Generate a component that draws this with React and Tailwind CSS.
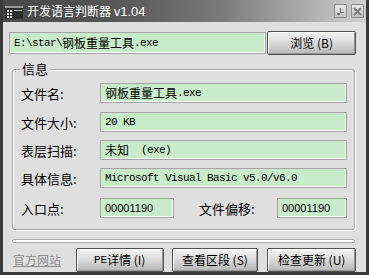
import React from "react";

const CJK = '"Noto Sans CJK SC", sans-serif';

function Mixed({ text }) {
  const parts = [];
  let cur = "";
  let curCjk = null;
  for (const ch of text) {
    const isCjk = ch.charCodeAt(0) > 0x2e80;
    if (curCjk === null || isCjk === curCjk) {
      cur += ch;
    } else {
      parts.push([cur, curCjk]);
      cur = ch;
    }
    curCjk = isCjk;
  }
  if (cur) parts.push([cur, curCjk]);
  return (
    <>
      {parts.map(([t, c], i) =>
        c ? (
          <span key={i} className="font-['Noto_Sans_CJK_SC'] text-[12px]">
            {t}
          </span>
        ) : (
          <span key={i} className="font-['Liberation_Mono'] text-[11px] tracking-[-0.6px] whitespace-pre">
            {t}
          </span>
        )
      )}
    </>
  );
}

function Field({ children, className = "" }) {
  return (
    <div
      className={
        "h-[20px] flex items-center px-[4px] bg-[#c8ebca] border border-[#a4a4a4] shadow-[inset_-1px_-1px_0_#ffffff] text-black leading-none " +
        className
      }
    >
      {children}
    </div>
  );
}

function Btn({ children, className = "" }) {
  return (
    <div
      className={
        "h-[24px] flex items-center justify-center border border-[#505050] rounded-[2px] bg-[linear-gradient(to_bottom,#f4f4f4,#dcdcdc_45%,#c4c4c4_80%,#b4b4b4)] shadow-[inset_1px_1px_0_#ffffff,inset_-1px_-1px_0_#9a9a9a] text-[12px] text-black font-['Noto_Sans_CJK_SC'] " +
        className
      }
    >
      {children}
    </div>
  );
}

function Label({ children, className = "" }) {
  return (
    <div className={"text-[13px] text-black font-['Noto_Sans_CJK_SC'] leading-none " + className}>
      {children}
    </div>
  );
}

export default function App() {
  return (
    <div className="w-[369px] h-[275px] flex flex-col bg-[#dfdfdf] border-l-[3px] border-r-[3px] border-b-[3px] border-[#3a3a3a] overflow-hidden" style={{ fontFamily: CJK }}>
      {/* title bar */}
      <div className="h-[22px] -mx-[3px] flex items-center bg-[linear-gradient(to_right,#484848,#555555_30%,#7a7a7a_60%,#d2d2d2)] shrink-0">
        <svg width="18" height="13" viewBox="0 0 18 13" className="ml-[5px] mt-[2px]">
          <rect x="0" y="0" width="18" height="13" fill="#2e2e2e" />
          <rect x="0" y="0" width="18" height="2" fill="#9a9a9a" />
          <rect x="2" y="4" width="2" height="2" fill="#dcdcdc" />
          <rect x="2" y="7" width="2" height="2" fill="#dcdcdc" />
          <rect x="2" y="10" width="2" height="2" fill="#dcdcdc" />
          <rect x="5" y="4" width="2" height="2" fill="#dcdcdc" />
          <rect x="5" y="7" width="2" height="2" fill="#dcdcdc" />
          <rect x="5" y="10" width="2" height="2" fill="#dcdcdc" />
          <rect x="9" y="4" width="8" height="1" fill="#bdbdbd" />
        </svg>
        <div className="ml-[4px] text-white text-[12px] leading-none font-['Noto_Sans_CJK_SC']">
          开发语言判断器 <span className="font-['Liberation_Sans'] text-[13px]">v1.04</span>
        </div>
        <div className="ml-auto flex items-center gap-[4px] mr-[5px]">
          <div className="w-[13px] h-[14px] border border-[#8a8a8a] bg-[linear-gradient(to_bottom,#e8e8e8,#c4c4c4)] rounded-[1px] flex items-center justify-center">
            <svg width="9" height="9" viewBox="0 0 9 9">
              <rect x="4" y="1" width="1" height="5" fill="#6a6a6a" />
              <rect x="4" y="5" width="4" height="1" fill="#6a6a6a" />
              <rect x="1" y="6" width="3" height="2" fill="#6a6a6a" />
            </svg>
          </div>
          <div className="w-[13px] h-[14px] border border-[#8a8a8a] bg-[linear-gradient(to_bottom,#e8e8e8,#c4c4c4)] rounded-[1px] flex items-center justify-center">
            <svg width="9" height="9" viewBox="0 0 9 9">
              <path d="M1 1 L8 8 M8 1 L1 8" stroke="#7a7a7a" strokeWidth="2" />
            </svg>
          </div>
        </div>
      </div>

      {/* path row */}
      <div className="flex items-center mt-[9px] pl-[6px] pr-[10px]">
        <Field className="w-[258px] h-[22px]">
          <Mixed text="E:\star\钢板重量工具.exe" />
        </Field>
        <Btn className="ml-[1px] w-[89px]">浏览 (B)</Btn>
      </div>

      {/* group box */}
      <div className="relative mt-[14px] ml-[9px] mr-[11px] h-[162px] border border-[#a6a6a6] rounded-[3px] shadow-[1px_1px_0_#ffffff,inset_1px_1px_0_#ffffff] flex flex-col pl-[8px] pr-[7px] pt-[13px]">
        <div className="absolute -top-[9px] left-[7px] px-[2px] bg-[#dfdfdf] text-[13px] leading-[16px] text-black">
          信息
        </div>
        <div className="flex items-center">
          <Label className="w-[79px]">文件名:</Label>
          <Field className="flex-1">
            <Mixed text="钢板重量工具.exe" />
          </Field>
        </div>
        <div className="flex items-center mt-[9px]">
          <Label className="w-[79px]">文件大小:</Label>
          <Field className="flex-1">
            <Mixed text="20 KB" />
          </Field>
        </div>
        <div className="flex items-center mt-[8px]">
          <Label className="w-[79px]">表层扫描:</Label>
          <Field className="flex-1">
            <Mixed text="未知  (exe)" />
          </Field>
        </div>
        <div className="flex items-center mt-[8px]">
          <Label className="w-[79px]">具体信息:</Label>
          <Field className="flex-1">
            <Mixed text="Microsoft Visual Basic v5.0/v6.0" />
          </Field>
        </div>
        <div className="flex items-center mt-[10px]">
          <Label className="w-[79px]">入口点:</Label>
          <Field className="w-[74px] font-['Liberation_Sans'] text-[11px]">00001190</Field>
          <Label className="ml-[25px] w-[78px]">文件偏移:</Label>
          <Field className="flex-1 font-['Liberation_Sans'] text-[11px]">00001190</Field>
        </div>
      </div>

      {/* separator */}
      <div className="mt-[9px] ml-[9px] mr-[11px] h-[4px] border border-[#a8a8a8] bg-white rounded-[2px]" />

      {/* bottom row */}
      <div className="flex items-center mt-[5px] pl-[10px] pr-[10px]">
        <div className="w-[63px] text-[12px] text-[#8a8a8a] underline leading-none">官方网站</div>
        <Btn className="w-[88px]">
          <span className="font-['Liberation_Mono'] text-[11px]">PE</span>详情 (I)
        </Btn>
        <Btn className="ml-[8px] w-[87px]">查看区段 (S)</Btn>
        <Btn className="ml-[9px] w-[89px]">检查更新 (U)</Btn>
      </div>
    </div>
  );
}
